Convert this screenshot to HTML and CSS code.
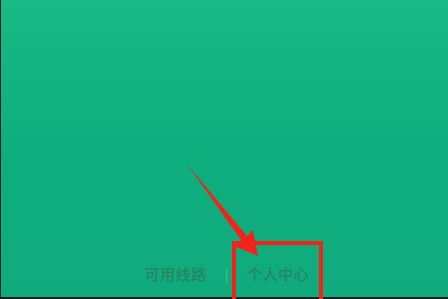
FILE: index.html
```html
<!DOCTYPE html>
<html lang="zh">
<head>
<meta charset="utf-8">
<link rel="stylesheet" href="styles.css">
</head>
<body>
<div class="screen">
  <div class="panel">
    <nav class="links">
      <span class="link">可用线路</span>
      <span class="sep">|</span>
      <span class="link">个人中心</span>
    </nav>
  </div>
  <svg class="annot" width="448" height="299" viewBox="0 0 448 299">
    <polygon points="187,164 247,236 253,230 258,256 234,246 241,240" fill="#f2231b"/>
    <path d="M234,299 V243 H321 V299" fill="none" stroke="#f2231b" stroke-width="4"/>
  </svg>
</div>
</body>
</html>
```
FILE: styles.css
```css
html, body {
  margin: 0;
  padding: 0;
  background: #1c1f1e;
}
.screen {
  position: relative;
  width: 448px;
  height: 299px;
  overflow: hidden;
}
.panel {
  margin-left: 1px;
  height: 297px;
  background: linear-gradient(to bottom, #19b985 0%, #0eae7e 50%, #10ab7c 100%);
  display: flex;
  flex-direction: column;
  justify-content: flex-end;
}
.links {
  display: flex;
  justify-content: center;
  align-items: center;
  padding: 0 0 13px 5px;
  font-family: "Noto Sans CJK SC", "Noto Sans", sans-serif;
  font-size: 15px;
  font-weight: 500;
  line-height: 20px;
  color: #2a8464;
}
.link {
  letter-spacing: 0.5px;
}
.sep {
  margin: 0 19px 0 18px;
  color: #52c49c;
  font-size: 13px;
  font-weight: 400;
}
.annot {
  position: absolute;
  left: 0;
  top: 0;
}
```
